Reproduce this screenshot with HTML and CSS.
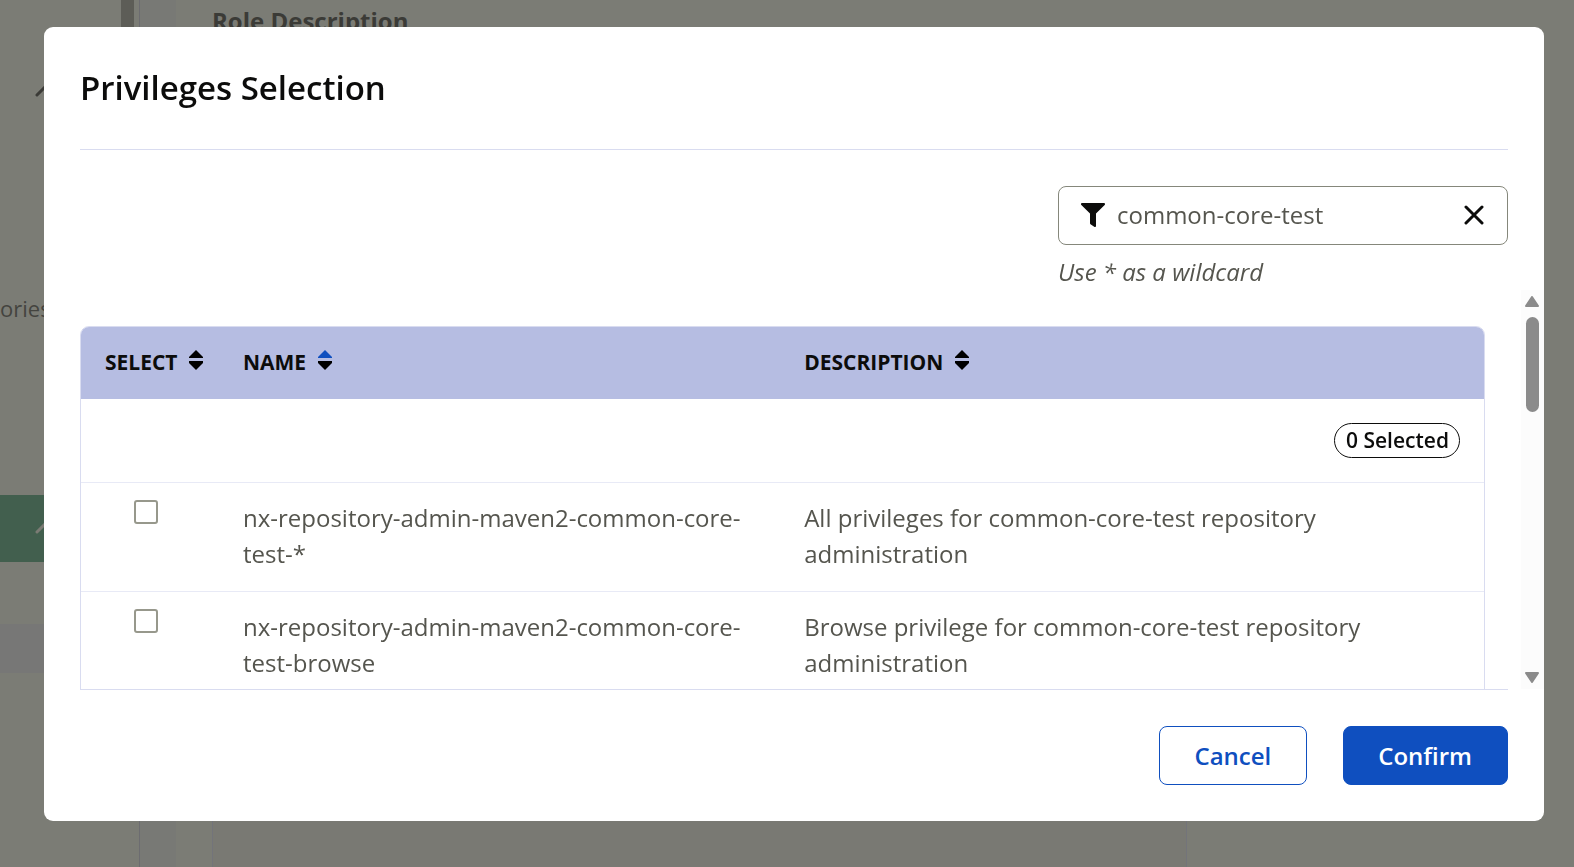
FILE: index.html
```html
<!DOCTYPE html>
<html lang="en">
<head>
    <meta charset="UTF-8">
    <meta name="viewport" content="width=device-width, initial-scale=1.0">
    <title>Privileges Selection</title>
    <link rel="stylesheet" href="styles.css">
</head>
<body>
    <!-- Page behind the dialog -->
    <div class="page" aria-hidden="true">
        <div class="sidebar">
            <div class="menu">
                <div class="menu-item group">
                    <svg class="chevron" viewBox="0 0 28 16"><path d="M2 14 L14 2 L26 14"/></svg>
                </div>
                <div class="menu-item sub">ories</div>
                <div class="menu-item active">
                    <svg class="chevron" viewBox="0 0 28 16"><path d="M2 14 L14 2 L26 14"/></svg>
                </div>
                <div class="menu-item hover"></div>
            </div>
            <div class="menu-track"><div class="menu-thumb"></div></div>
        </div>
        <div class="main">
            <div class="field-title">Role Description</div>
            <div class="panel"></div>
        </div>
    </div>

    <div class="overlay">
        <div class="modal" role="dialog" aria-labelledby="modal-title">
            <header class="modal-header">
                <h2 id="modal-title">Privileges Selection</h2>
            </header>

            <div class="filter">
                <div class="filter-box">
                    <svg class="icon-filter" viewBox="0 0 512 512"><path d="M488 0H24C2.700 0-8.100 25.900 7.100 41L192 225.900V432c0 7.800 3.800 15.200 10.200 19.700l80 56C298 518.700 320 507.500 320 488V225.900L504.900 41C520 25.900 509.300 0 488 0z"/></svg>
                    <input type="text" id="filter" value="common-core-test" aria-label="Filter" aria-describedby="filter-hint">
                    <button type="button" class="clear" aria-label="Clear filter">
                        <svg viewBox="0 0 20 20"><path d="M2 2 L18 18 M18 2 L2 18"/></svg>
                    </button>
                </div>
                <p id="filter-hint" class="hint">Use * as a wildcard</p>
            </div>

            <div class="scroll-area">
                <div class="scroll-content">
                    <table class="table">
                        <thead>
                            <tr>
                                <th class="col-select">Select
                                    <svg class="sort" viewBox="0 0 14 20"><path d="M7 0 L14 7 V8 H0 V7z"/><path d="M7 20 L14 13 V11 H0 V13z"/></svg>
                                </th>
                                <th class="col-name">Name
                                    <svg class="sort asc" viewBox="0 0 14 20"><path d="M7 0 L14 7 V8 H0 V7z"/><path d="M7 20 L14 13 V11 H0 V13z"/></svg>
                                </th>
                                <th class="col-description">Description
                                    <svg class="sort" viewBox="0 0 14 20"><path d="M7 0 L14 7 V8 H0 V7z"/><path d="M7 20 L14 13 V11 H0 V13z"/></svg>
                                </th>
                            </tr>
                        </thead>
                        <tbody>
                            <tr class="counter-row">
                                <td colspan="3"><div class="counter">0 Selected</div></td>
                            </tr>
                            <tr>
                                <td><input type="checkbox" id="priv1" aria-labelledby="priv1-name"></td>
                                <td><label for="priv1" id="priv1-name">nx-repository-admin-maven2-common-core-test-*</label></td>
                                <td>All privileges for common-core-test repository administration</td>
                            </tr>
                            <tr>
                                <td><input type="checkbox" id="priv2" aria-labelledby="priv2-name"></td>
                                <td><label for="priv2" id="priv2-name">nx-repository-admin-maven2-common-core-test-browse</label></td>
                                <td>Browse privilege for common-core-test repository administration</td>
                            </tr>
                        </tbody>
                    </table>
                </div>
                <div class="scrollbar" aria-hidden="true">
                    <svg class="arrow" viewBox="0 0 14 11"><path d="M7 1 L13 10 H1z"/></svg>
                    <div class="thumb"></div>
                    <svg class="arrow down" viewBox="0 0 14 11"><path d="M7 10 L13 1 H1z"/></svg>
                </div>
            </div>

            <footer class="modal-footer">
                <button type="button" class="btn">Cancel</button>
                <button type="button" class="btn primary">Confirm</button>
            </footer>
        </div>
    </div>
</body>
</html>
```
FILE: styles.css
```css
* {
    box-sizing: border-box;
}
body {
    margin: 0;
    height: 100vh;
    overflow: hidden;
    font-family: "Open Sans", "Noto Sans", sans-serif;
    font-size: 24px;
    line-height: 36px;
    color: #55554e;
    background-color: #7b7c75;
}

/* page behind the dialog */
.page {
    display: flex;
    height: 100vh;
}
.sidebar {
    display: flex;
    width: 140px;
    border-right: 1px solid #6c6c70;
}
.menu {
    flex: 1;
    overflow: hidden;
}
.menu-item {
    height: 67px;
    padding-left: 35px;
}
.menu-item.group {
    height: 180px;
    padding-top: 81px;
}
.menu-item.sub {
    height: 315px;
    padding: 110px 0 0;
    font-size: 22px;
    color: #44443f;
}
.menu-item.active {
    padding-top: 23px;
    background-color: #425f4e;
}
.menu-item.hover {
    height: 49px;
    margin-top: 62px;
    background-color: #777776;
}
.chevron {
    display: block;
    width: 28px;
    height: 16px;
    fill: none;
    stroke: #3b3b37;
    stroke-width: 3;
    stroke-linecap: round;
}
.active .chevron {
    stroke: #7b7b74;
}
.menu-track {
    width: 18px;
}
.menu-thumb {
    width: 13px;
    height: 240px;
    background-color: #5d5d57;
}
.main {
    flex: 1;
    display: flex;
    flex-direction: column;
    padding: 3px 387px 0 36px;
    border-left: 36px solid #787975;
}
.field-title {
    font-weight: 700;
    color: #3b3b37;
}
.panel {
    flex: 1;
    border: solid #73747a;
    border-width: 0 1px;
    background-color: #797973;
}

/* dialog */
.overlay {
    position: fixed;
    inset: 0;
    display: flex;
    padding: 27px 30px 46px 44px;
}
.modal {
    flex: 1;
    display: flex;
    flex-direction: column;
    min-width: 0;
    border-radius: 9px;
    background-color: #fff;
    overflow: hidden;
}
.modal-header {
    margin: 0 36px;
    padding: 36px 0;
    border-bottom: 1px solid #d9dcf0;
}
.modal-header h2 {
    margin: 0;
    font-size: 33px;
    line-height: 50px;
    font-weight: 600;
    color: #0c0c0b;
}
.filter {
    align-self: flex-end;
    width: 450px;
    margin: 36px 36px 0;
}
.filter-box {
    display: flex;
    align-items: center;
    height: 59px;
    padding: 0 23px 2px 22px;
    border: 1px solid #85877b;
    border-radius: 8px;
}
.icon-filter {
    width: 24px;
    height: 24px;
    fill: #0c0c0b;
}
.filter-box input {
    flex: 1;
    min-width: 0;
    padding: 0 12px;
    border: 0;
    outline: 0;
    font: inherit;
    color: inherit;
    background: none;
}
.clear {
    padding: 0;
    border: 0;
    background: none;
    cursor: pointer;
}
.clear svg {
    display: block;
    width: 20px;
    height: 20px;
    stroke: #0c0c0b;
    stroke-width: 3;
    stroke-linecap: round;
}
.hint {
    margin: 9px 0 0;
    font-style: italic;
}
.scroll-area {
    flex: 1;
    display: flex;
    min-height: 0;
}
.scroll-content {
    flex: 1;
    padding: 36px 36px 0;
    overflow-y: auto;
    scrollbar-width: none;
}
.scrollbar {
    display: flex;
    flex-direction: column;
    align-items: center;
    width: 23px;
    padding: 6px 1px 6px 0;
    background-color: #fcfcfc;
}
.arrow {
    width: 14px;
    height: 11px;
    fill: #8b8b8b;
    stroke: #8b8b8b;
    stroke-width: 2;
    stroke-linejoin: round;
}
.arrow.down {
    margin-top: auto;
}
.thumb {
    width: 13px;
    height: 95px;
    margin-top: 10px;
    border-radius: 7px;
    background-color: #8b8b8b;
}

/* privileges table */
.table {
    width: 100%;
    table-layout: fixed;
    border: 1px solid #d9dcf0;
    border-radius: 9px 9px 0 0;
    border-spacing: 0;
    overflow: hidden;
}
th {
    padding: 17px 0 19px 24px;
    font-size: 21px;
    font-weight: 700;
    text-align: left;
    text-transform: uppercase;
    white-space: nowrap;
    color: #0c0c0b;
    background-color: #b6bde2;
}
.col-select {
    width: 138px;
}
.col-name {
    width: 40%;
}
.sort {
    width: 14px;
    height: 20px;
    margin-left: 6px;
}
.sort.asc path:first-child {
    fill: #0f4fbf;
}
td {
    padding: 17px 24px 18px;
    border-bottom: 1px solid #e8eaf6;
    vertical-align: top;
}
td:not([colspan]) {
    height: 109px;
}
.counter-row td {
    padding: 24px;
}
.counter {
    width: fit-content;
    margin-left: auto;
    padding: 0 10px 0 11px;
    border: 1px solid #0c0c0b;
    border-radius: 18px;
    font-size: 21px;
    line-height: 33px;
    font-weight: 600;
    color: #0c0c0b;
}
td input {
    display: block;
    appearance: none;
    width: 24px;
    height: 24px;
    margin: 0 0 0 29px;
    border: 2px solid #97988c;
    border-radius: 3px;
    background-color: #fff;
}
td input:checked {
    background-color: #0f4fbf;
}

.modal-footer {
    display: flex;
    justify-content: flex-end;
    gap: 36px;
    margin: 0 36px;
    padding: 36px 0;
    border-top: 1px solid #d9dcf0;
}
.btn {
    height: 59px;
    padding: 0 35px 0 34px;
    border: 1px solid #0f4fbf;
    border-radius: 8px;
    font: inherit;
    font-weight: 600;
    color: #0f4fbf;
    background-color: #fff;
    cursor: pointer;
}
.btn.primary {
    color: #fff;
    background-color: #0f4fbf;
}
```
